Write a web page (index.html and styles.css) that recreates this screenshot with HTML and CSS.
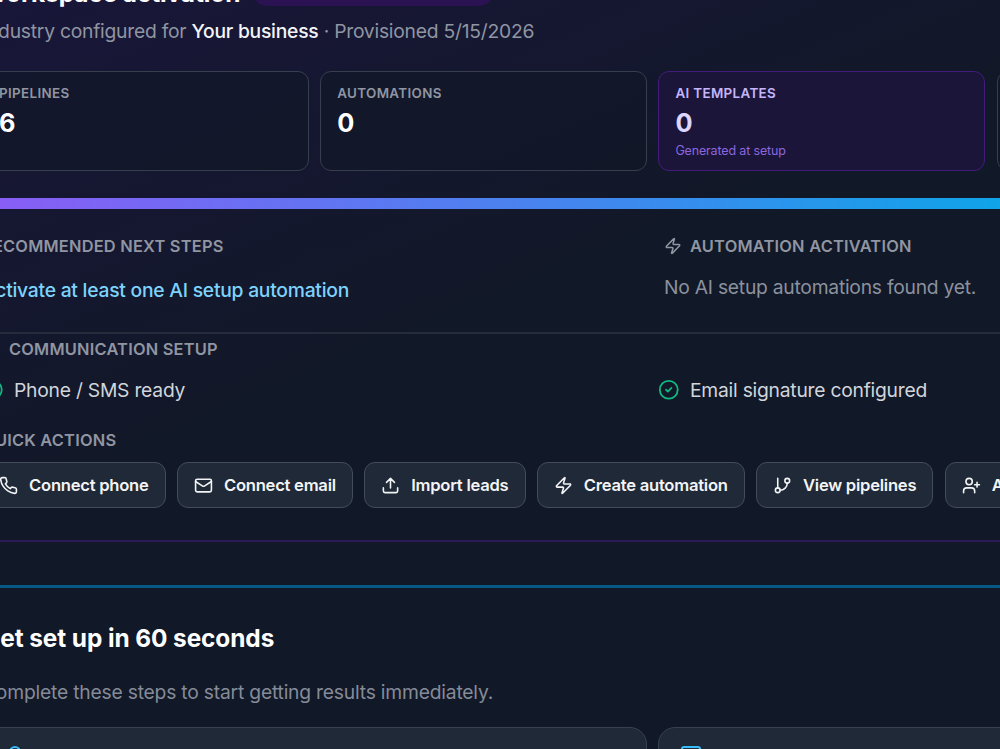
FILE: index.html
```
<!DOCTYPE html>
<html lang="en">
<head>
  <meta charset="utf-8">
  <title>Workspace activation</title>
  <link rel="stylesheet" href="styles.css">
</head>
<body>
  <section class="activation">
    <div class="title-row">
      <h2>Workspace activation</h2>
      <span class="badge"></span>
    </div>
    <p class="subtitle">Industry configured for <strong>Your business</strong> · Provisioned 5/15/2026</p>

    <div class="stats">
      <div class="stat">
        <div class="stat-label">Pipelines</div>
        <div class="stat-value">6</div>
      </div>
      <div class="stat">
        <div class="stat-label">Automations</div>
        <div class="stat-value">0</div>
      </div>
      <div class="stat stat-ai">
        <div class="stat-label">AI templates</div>
        <div class="stat-value">0</div>
        <div class="stat-note">Generated at setup</div>
      </div>
      <div class="stat"></div>
    </div>

    <div class="progress"></div>

    <div class="columns">
      <div class="next-steps">
        <h3>Recommended next steps</h3>
        <a class="step-link">Activate at least one AI setup automation</a>
      </div>
      <div class="automation">
        <h3>
          <svg class="icon" viewBox="0 0 24 24"><path d="M4 14a1 1 0 0 1-.78-1.63l9.9-10.2a.5.5 0 0 1 .86.46l-1.92 6.02A1 1 0 0 0 13 10h7a1 1 0 0 1 .78 1.63l-9.9 10.2a.5.5 0 0 1-.86-.46l1.92-6.02A1 1 0 0 0 11 14z"/></svg>
          Automation activation
        </h3>
        <p>No AI setup automations found yet.</p>
      </div>
    </div>

    <div class="communication">
      <h3>Communication setup</h3>
      <div class="checks">
        <div class="check">
          <svg class="icon" viewBox="0 0 24 24"><circle cx="12" cy="12" r="10"/><path d="m9 12 2 2 4-4"/></svg>
          <span>Phone / SMS ready</span>
        </div>
        <div class="check">
          <svg class="icon" viewBox="0 0 24 24"><circle cx="12" cy="12" r="10"/><path d="m9 12 2 2 4-4"/></svg>
          <span>Email signature configured</span>
        </div>
      </div>
    </div>

    <h3 class="quick-title">Quick actions</h3>
    <div class="actions">
      <button>
        <svg class="icon" viewBox="0 0 24 24"><path d="M22 16.92v3a2 2 0 0 1-2.18 2 19.79 19.79 0 0 1-8.63-3.07 19.5 19.5 0 0 1-6-6 19.79 19.79 0 0 1-3.07-8.67A2 2 0 0 1 4.11 2h3a2 2 0 0 1 2 1.72 12.84 12.84 0 0 0 .7 2.81 2 2 0 0 1-.45 2.11L8.09 9.91a16 16 0 0 0 6 6l1.27-1.27a2 2 0 0 1 2.11-.45 12.84 12.84 0 0 0 2.81.7A2 2 0 0 1 22 16.92z"/></svg>
        Connect phone
      </button>
      <button>
        <svg class="icon" viewBox="0 0 24 24"><rect x="2" y="4" width="20" height="16" rx="2"/><path d="m22 7-8.97 5.7a1.94 1.94 0 0 1-2.06 0L2 7"/></svg>
        Connect email
      </button>
      <button>
        <svg class="icon" viewBox="0 0 24 24"><path d="M21 15v4a2 2 0 0 1-2 2H5a2 2 0 0 1-2-2v-4M17 8l-5-5-5 5M12 3v12"/></svg>
        Import leads
      </button>
      <button>
        <svg class="icon" viewBox="0 0 24 24"><path d="M4 14a1 1 0 0 1-.78-1.63l9.9-10.2a.5.5 0 0 1 .86.46l-1.92 6.02A1 1 0 0 0 13 10h7a1 1 0 0 1 .78 1.63l-9.9 10.2a.5.5 0 0 1-.86-.46l1.92-6.02A1 1 0 0 0 11 14z"/></svg>
        Create automation
      </button>
      <button>
        <svg class="icon" viewBox="0 0 24 24"><path d="M6 3v12"/><circle cx="18" cy="6" r="3"/><circle cx="6" cy="18" r="3"/><path d="M18 9a9 9 0 0 1-9 9"/></svg>
        View pipelines
      </button>
      <button>
        <svg class="icon" viewBox="0 0 24 24"><path d="M16 21v-2a4 4 0 0 0-4-4H6a4 4 0 0 0-4 4v2"/><circle cx="9" cy="7" r="4"/><path d="M19 8v6M22 11h-6"/></svg>
        Add team
      </button>
    </div>
  </section>

  <section class="setup">
    <h2>Get set up in 60 seconds</h2>
    <p>Complete these steps to start getting results immediately.</p>
    <div class="setup-cards">
      <div class="setup-card">
        <svg class="icon" viewBox="0 0 24 24"><circle cx="12" cy="8" r="5"/><path d="M20 21a8 8 0 0 0-16 0"/></svg>
      </div>
      <div class="setup-card">
        <svg class="icon" viewBox="0 0 24 24"><rect x="3" y="3" width="18" height="18" rx="2"/></svg>
      </div>
    </div>
  </section>
</body>
</html>
```
FILE: styles.css
```
* {
  box-sizing: border-box;
}
html {
  overflow: hidden;
}
body {
  margin: 0;
  height: 749px;
  overflow: hidden;
  background: #111827;
  color: #fff;
  font-family: Inter, "Liberation Sans", sans-serif;
}
h2, h3, p {
  margin: 0;
  white-space: nowrap;
}
.icon {
  width: 20px;
  height: 20px;
  flex: none;
  fill: none;
  stroke: currentColor;
  stroke-width: 2;
  stroke-linecap: round;
  stroke-linejoin: round;
}

/* activation panel, wider than the window on both sides */
.activation {
  width: 1412px;
  height: 602px;
  margin: -60px 0 0 -42px;
  padding: 40px 24px 0;
  border-bottom: 2px solid #2c1a57;
  background: linear-gradient(to bottom right, #1a163c, #111827 50%, #111827);
}
.title-row {
  display: flex;
  align-items: flex-end;
  height: 26px;
}
.title-row h2 {
  position: relative;
  top: 5px;
}
h2 {
  font-size: 24.4px;
  line-height: 36px;
  font-weight: 700;
  letter-spacing: -.08px;
}
.badge {
  width: 242px;
  height: 30px;
  margin-left: 12px;
  border-radius: 15px;
  background: #2a1253;
}
.subtitle {
  margin-top: 11px;
  font-size: 19.3px;
  line-height: 28px;
  letter-spacing: -.24px;
  color: #9095a2;
}
.subtitle strong {
  font-weight: 500;
  color: #f3f4f6;
}

.stats {
  display: grid;
  grid-template-columns: repeat(4, 327px);
  gap: 11.2px;
  margin-top: 26px;
}
.stat {
  height: 100px;
  padding: 11px 16px;
  border: 1.4px solid #373e4e;
  border-radius: 11px;
  background: rgba(17, 24, 39, .6);
}
.stat-label {
  font-size: 13.4px;
  line-height: 20px;
  font-weight: 600;
  letter-spacing: .35px;
  text-transform: uppercase;
  color: #9095a2;
}
.stat-value {
  font-size: 25.3px;
  line-height: 34px;
  margin-top: 2.5px;
  font-weight: 700;
}
.stat-note {
  margin-top: 3px;
  font-size: 12.5px;
  line-height: 16px;
  letter-spacing: -.15px;
  color: #8b67dd;
}
.stat-ai {
  border-color: #421b7b;
  background: #1c153a;
}
.stat-ai .stat-label {
  color: #c4b5fd;
}
.stat-ai .stat-value {
  color: #ddd6fe;
}

.progress {
  width: 1040px;
  height: 11px;
  margin: 27px 0 0 -4px;
  background: linear-gradient(to right, #8b5cf6, #0ea5e9);
}

h3 {
  display: flex;
  align-items: center;
  font-size: 16.4px;
  line-height: 24px;
  font-weight: 600;
  letter-spacing: .22px;
  text-transform: uppercase;
  color: #9095a2;
}
.columns {
  display: grid;
  grid-template-columns: 682px 1fr;
  height: 125px;
  padding-top: 25px;
  border-bottom: 2px solid #252d3c;
}
.step-link {
  display: block;
  margin-top: 18px;
  font-size: 19.3px;
  line-height: 28px;
  font-weight: 500;
  letter-spacing: -.24px;
  white-space: nowrap;
  color: #7dd3fc;
}
.automation h3 {
  gap: 8px;
}
.automation .icon {
  width: 18px;
  height: 18px;
}
.automation p {
  margin-top: 15px;
  font-size: 19.3px;
  line-height: 28px;
  letter-spacing: -.25px;
  color: #8b919e;
}

.communication h3 {
  margin: 3px 0 0 27px;
}
.checks {
  display: grid;
  grid-template-columns: 676px 1fr;
  margin-top: 15px;
}
.check {
  display: flex;
  align-items: center;
  gap: 10.5px;
  font-size: 19.3px;
  line-height: 28px;
  letter-spacing: -.24px;
  color: #d1d5db;
}
.check .icon {
  width: 21.5px;
  height: 21.5px;
  color: #10b981;
}

.quick-title {
  margin-top: 24px;
}
.actions {
  display: flex;
  gap: 11.2px;
  margin-top: 10px;
}
button {
  display: flex;
  align-items: center;
  gap: 11px;
  flex: none;
  height: 46px;
  padding: 0 16.1px;
  border: 1.4px solid #434c5a;
  border-radius: 11px;
  background: #1f2937;
  color: #f3f4f6;
  font: 600 16.6px/24px Inter, sans-serif;
  letter-spacing: -.25px;
  white-space: nowrap;
}
button .icon {
  width: 19px;
  height: 19px;
}

.setup {
  width: 1412px;
  margin: 43px 0 0 -42px;
  padding: 32px 24px 0;
  border-top: 3px solid #075985;
}
.setup p {
  margin-top: 22px;
  font-size: 19.3px;
  line-height: 28px;
  letter-spacing: -.21px;
  color: #858b98;
}
.setup-cards {
  display: grid;
  grid-template-columns: 665px 665px;
  gap: 11px;
  margin-top: 21px;
}
.setup-card {
  height: 100px;
  padding: 15.5px 20px;
  border: 1.4px solid #374151;
  border-radius: 17px;
  background: #1f2937;
  color: #38bdf8;
}
.setup-card .icon {
  width: 24px;
  height: 24px;
}
```
